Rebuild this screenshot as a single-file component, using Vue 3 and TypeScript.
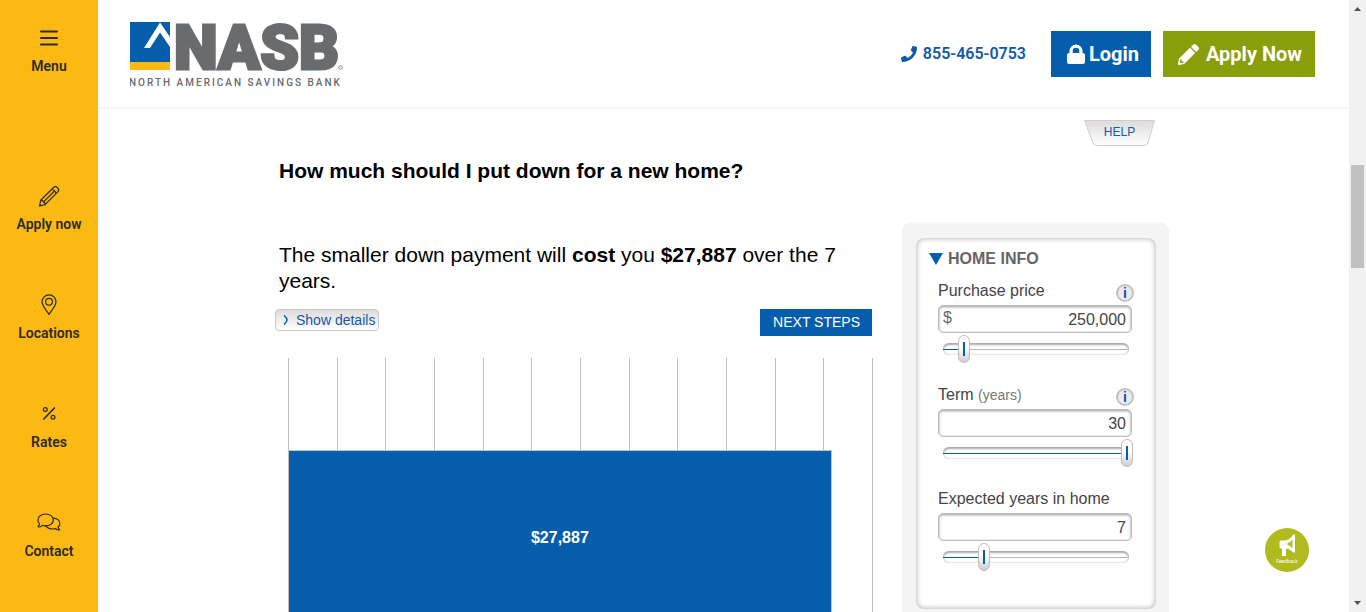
<script setup lang="ts">
import { computed, reactive, ref } from 'vue'

interface Field {
  id: string
  label: string
  unit?: string
  prefix?: string
  info: boolean
  min: number
  max: number
  step: number
  value: number
}

const links = [
  { id: 'apply', label: 'Apply now' },
  { id: 'locations', label: 'Locations' },
  { id: 'rates', label: 'Rates' },
  { id: 'contact', label: 'Contact' },
]

const fields = reactive<Field[]>([
  { id: 'price', label: 'Purchase price', prefix: '$', info: true, min: 50000, max: 1800000, step: 1000, value: 250000 },
  { id: 'term', label: 'Term', unit: '(years)', info: true, min: 1, max: 30, step: 1, value: 30 },
  { id: 'years', label: 'Expected years in home', info: false, min: 1, max: 28, step: 1, value: 7 },
])

const cost = ref(27887)
const axisMax = 30000
const intervals = 12
const costText = computed(() => '$' + cost.value.toLocaleString('en-US'))
const barWidth = computed(() => (cost.value / axisMax) * 100 + '%')

function fill(f: Field): string {
  return ((f.value - f.min) / (f.max - f.min)) * 100 + '%'
}

function onText(f: Field, e: Event) {
  const n = Number((e.target as HTMLInputElement).value.replace(/[^0-9]/g, ''))
  f.value = Math.min(f.max, Math.max(f.min, n))
}
</script>

<template>
  <div class="page">
    <nav class="side" aria-label="Quick links">
      <button class="side-item menu" type="button">
        <svg width="24" height="24" viewBox="0 0 24 24" stroke="#2b2b2b" stroke-width="2" stroke-linecap="round">
          <path d="M4 5.500h16M4 12h16M4 18.500h16" />
        </svg>
        <span>Menu</span>
      </button>
      <a v-for="l in links" :key="l.id" class="side-item" href="#">
        <svg width="24" height="24" viewBox="0 0 24 24" fill="none" stroke="#2b2b2b" stroke-width="1.200" stroke-linejoin="round" stroke-linecap="round">
          <template v-if="l.id === 'apply'">
            <path d="M2.500 22l1.200-5.700L16.600 3.500c1.400-1.200 2.900-.8 4 .3s1.500 2.600.2 4L8 20.700zM3.700 16.300c2.300 0 4.300 2 4.300 4.400M14.600 5.500c2.300.3 4 2 4.300 4.300M6.300 18.100L17 7.500M2.500 22l1.700-.4-1.300-1.300z" />
          </template>
          <template v-else-if="l.id === 'locations'">
            <path d="M12 21.500C9.500 17.300 5 13 5 8.800a7 7 0 0 1 14 0c0 4.200-4.500 8.500-7 12.700z" />
            <circle cx="12" cy="8.800" r="3.400" />
          </template>
          <template v-else-if="l.id === 'rates'">
            <path d="M6.800 17L17.400 6" stroke-width="1.700" />
            <circle cx="8.300" cy="7.500" r="1.900" />
            <circle cx="16" cy="15.300" r="1.900" />
          </template>
          <template v-else>
            <path d="M2.500 16c-.8 0-1.300-.2-1.500-.4 1.200-.9 1.500-2 1.400-3C1.300 11.400.9 10.200.9 9c0-3.600 3.500-6 7.700-6s7.700 2.400 7.700 5.900-3.500 5.900-7.700 5.900c-1.300 0-2.300-.1-3.300-.5-.8.9-1.700 1.500-2.800 1.700z" />
            <path d="M16.500 7.200c3.600.2 6.300 2.300 6.300 5.300 0 1.300-.5 2.500-1.600 3.500 0 1.100.5 2 1.500 2.700-1.500.5-3 .1-4.100-1-3.800.9-8.200-.2-10-2.900" />
          </template>
        </svg>
        <span>{{ l.label }}</span>
      </a>
    </nav>

    <div class="body">
      <header class="top">
        <a class="logo" href="#" aria-label="NASB North American Savings Bank">
          <svg width="216" height="90" viewBox="0 -15 216 90">
            <path d="M0 2h40v40H0z" fill="#045eab" />
            <path d="M0 42h40v8H0z" fill="#fdb913" />
            <path d="M14 28L30 2.500l10 14.500v10L30 12.500 20 28z" fill="#fff" />
            <text x="44" y="49" class="word">NASB</text>
            <circle cx="210.500" cy="47.500" r="1.800" fill="none" stroke="#8a8b8d" />
            <text x="-1" y="66" class="tag">NORTH AMERICAN SAVINGS BANK</text>
          </svg>
        </a>
        <div class="actions">
          <a class="phone" href="tel:855-465-0753">
            <svg width="16" height="16" viewBox="0 0 512 512" fill="#1459a4">
              <path d="M493 25L389 1c-11-3-23 3-27 14l-48 112c-4 10-1 21 7 28l61 50c-36 77-99 140-178 178l-50-61c-7-8-18-11-28-7L14 363c-10 4-16 16-13 27l24 104c2 11 12 18 23 18 256 0 464-207 464-464 0-11-8-20-19-23z" />
            </svg>
            <span>855-465-0753</span>
          </a>
          <button class="btn login" type="button">
            <svg width="18" height="21" viewBox="0 0 18 21">
              <path d="M2.500 9V7a6.500 6.500 0 0 1 13 0v2H16c1.100 0 2 .9 2 2v7c0 1.100-.9 2-2 2H2c-1.100 0-2-.9-2-2v-7c0-1.100.9-2 2-2zm3.200 0h6.600V7a3.300 3.300 0 0 0-6.600 0z" fill="#fff" />
            </svg>
            <span>Login</span>
          </button>
          <button class="btn apply" type="button">
            <svg width="21" height="21" viewBox="0 0 512 512" fill="#fff">
              <path d="M498 142l-46 46c-5 5-13 5-17 0L324 77c-5-5-5-12 0-17l46-46c19-19 49-19 68 0l60 60c19 19 19 49 0 68zM284 100L22 362 0 484c-3 16 12 30 28 28l122-22 262-262c5-5 5-13 0-17L301 100c-4-5-12-5-17 0zM88 424h48v36l-64 11-31-31 11-64h36z" />
            </svg>
            <span>Apply Now</span>
          </button>
        </div>
      </header>

      <main class="calc">
        <div class="help-row">
          <button class="help" type="button">
            <svg width="71" height="27" viewBox="0 0 72 27" preserveAspectRatio="none" aria-hidden="true">
              <defs>
                <linearGradient id="tab" x1="0" y1="0" x2="0" y2="1">
                  <stop offset="0" stop-color="#dedbdb" />
                  <stop offset="1" stop-color="#fff" />
                </linearGradient>
              </defs>
              <path d="M.5.5h71L65 22.500q-1 3-4 3H13q-3 0-4-3z" fill="url(#tab)" stroke="#cfcfcf" />
            </svg>
            <span>HELP</span>
          </button>
        </div>
        <h1>How much should I put down for a new home?</h1>

        <div class="columns">
          <section class="result">
            <p class="summary">
              The smaller down payment will <b>cost</b> you <b>{{ costText }}</b> over the 7 years.
            </p>
            <div class="tools">
              <button class="details" type="button">
                <svg width="6" height="10" viewBox="0 0 6 10" fill="none" stroke="#045eab" stroke-width="1.500">
                  <path d="M1 .5q3 2.500 3 4.500T1 9.500" />
                </svg>
                <span>Show details</span>
              </button>
              <button class="next" type="button">NEXT STEPS</button>
            </div>
            <div class="chart">
              <div class="lines"><i v-for="n in intervals" :key="n"></i></div>
              <div class="bar" :style="{ width: barWidth }">{{ costText }}</div>
            </div>
          </section>

          <aside class="panel">
            <div class="card">
              <button class="heading" type="button" aria-expanded="true">
                <svg width="14" height="12" viewBox="0 0 14 12"><path d="M0 0h14L7 12z" fill="#045eab" /></svg>
                <span>HOME INFO</span>
              </button>
              <div v-for="f in fields" :key="f.id" class="field">
                <div class="label-row">
                  <label :for="f.id">{{ f.label }} <small v-if="f.unit">{{ f.unit }}</small></label>
                  <button v-if="f.info" class="info" type="button" :aria-label="'About ' + f.label">i</button>
                </div>
                <div class="box">
                  <span v-if="f.prefix">{{ f.prefix }}</span>
                  <input :id="f.id" type="text" :value="f.value.toLocaleString('en-US')" @change="onText(f, $event)" />
                </div>
                <div class="slider">
                  <span class="rail"><span class="fill" :style="{ width: fill(f) }"></span></span>
                  <input v-model.number="f.value" type="range" :min="f.min" :max="f.max" :step="f.step" :aria-label="f.label" />
                </div>
              </div>
            </div>
          </aside>
        </div>
      </main>
    </div>

    <div class="scroll" aria-hidden="true">
      <svg width="17" height="17" viewBox="0 0 17 17"><path d="M5 11l3.500-4 3.500 4z" fill="#505050" /></svg>
      <div class="track"><div class="thumb"></div></div>
      <svg width="17" height="17" viewBox="0 0 17 17"><path d="M5 6l3.500 4L12 6z" fill="#505050" /></svg>
    </div>

    <button class="feedback" type="button">
      <svg width="44" height="44" viewBox="0 0 44 44">
        <path d="M16 12.500h4c4-.5 6.500-3 8-6h2v18h-2c-1.500-2-3.500-3.500-7-4V28h-4v-7.500h-1q-1.500 0-1.500-1.500v-5q0-1.500 1.500-1.500z" fill="#fff" />
        <path d="M22.500 15c2.500-.5 4-2 5-3.500v9c-1-1.500-2.500-3-5-3.500z" fill="#b0bb1f" />
        <text x="22" y="35" text-anchor="middle">Feedback</text>
      </svg>
    </button>
  </div>
</template>

<style>
html,
body {
  overflow: hidden;
}
body {
  margin: 0;
}
</style>

<style scoped>
.page {
  display: grid;
  grid-template-columns: 98px 1fr 17px;
  height: 100vh;
  overflow: hidden;
  background: #fff;
  font-family: "Liberation Sans", Arial, sans-serif;
}
button {
  margin: 0;
  padding: 0;
  border: 0;
  background: none;
  font: inherit;
  cursor: pointer;
}
a {
  text-decoration: none;
}
svg {
  display: block;
  flex: none;
}
.side {
  display: flex;
  flex-direction: column;
  gap: 59px;
  padding-top: 26px;
  background: #fdb913;
}
.side-item {
  display: flex;
  flex-direction: column;
  align-items: center;
  gap: 6px;
  color: #2b2b2b;
  font: 600 14px/20px Roboto, sans-serif;
}
.menu {
  margin-bottom: 49px;
}
.body {
  min-width: 0;
  overflow: hidden;
}
.top {
  display: flex;
  align-items: flex-start;
  justify-content: space-between;
  box-sizing: border-box;
  height: 109px;
  padding: 5px 34px 0 32px;
  border-bottom: 2px solid #f5f5f5;
}
.word {
  font: 900 62px Roboto, sans-serif;
  fill: #6a6b6d;
  stroke: #6a6b6d;
  stroke-width: 3px;
}
.tag {
  font: 500 10px Roboto, sans-serif;
  fill: #6a6b6d;
  letter-spacing: 2px;
}
.actions {
  display: flex;
  align-items: center;
  padding-top: 26px;
}
.phone {
  display: flex;
  align-items: center;
  gap: 6px;
  margin-right: 25px;
  color: #1459a4;
  font: 600 16px/22px Roboto, sans-serif;
}
.btn {
  display: flex;
  align-items: center;
  justify-content: center;
  height: 46px;
  color: #fff;
  font: 700 20px/24px Roboto, sans-serif;
}
.login {
  gap: 4px;
  width: 100px;
  margin-right: 12px;
  padding-left: 4px;
  background: #045eab;
}
.apply {
  gap: 7px;
  width: 152px;
  padding-left: 2px;
  background: #8a9d0a;
}
.calc {
  max-width: 891px;
  margin: 0 auto;
}
.help-row {
  display: flex;
  justify-content: flex-end;
  padding: 11px 14px 0 0;
}
.help {
  display: grid;
  padding-left: 2px;
  color: #1459a4;
  font: 12px/24px "Liberation Sans", Arial, sans-serif;
}
.help > * {
  grid-area: 1 / 1;
}
h1 {
  margin: 11px 0 0 1px;
  font-size: 21px;
  line-height: 26px;
}
.columns {
  display: grid;
  grid-template-columns: 1fr 267px;
  gap: 30px;
  margin-top: 39px;
}
.summary {
  margin: 19px 0 0 1px;
  font-size: 21px;
  line-height: 26px;
}
.tools {
  display: flex;
  justify-content: space-between;
  align-items: flex-start;
  margin: 15px 0 22px -3px;
}
.details {
  display: flex;
  align-items: center;
  gap: 7px;
  box-sizing: border-box;
  height: 22px;
  padding: 0 3px 0 7px;
  border: 1px solid #c6c6c6;
  border-radius: 4px;
  background: linear-gradient(#dedbdb, #fff);
  color: #1459a4;
  font-size: 14px;
}
.next {
  height: 27px;
  padding: 0 12px 2px 13px;
  background: #045eab;
  color: #fff;
  font-size: 14px;
}
.chart {
  display: grid;
  height: 266px;
  margin: 0 -1px 0 10px;
}
.chart > * {
  grid-area: 1 / 1;
}
.lines {
  display: grid;
  grid-template-columns: repeat(12, 1fr);
  border-right: 1px solid #c0c0c0;
}
.lines i {
  border-left: 1px solid #c0c0c0;
}
.bar {
  display: flex;
  align-items: center;
  justify-content: center;
  align-self: end;
  box-sizing: border-box;
  height: 174px;
  padding-top: 2px;
  border: 1px solid #c0c0c0;
  background: #045eab;
  color: #fff;
  font-weight: 700;
  font-size: 16px;
}
.panel {
  padding: 15px 13px 20px 14px;
  border-radius: 8px;
  background: #f4f4f4;
}
.card {
  padding: 10px 13px 18px;
  border-radius: 8px;
  background: #fff;
  box-shadow: inset 0 0 5px 1px #bdbdbd;
}
.heading {
  display: flex;
  align-items: center;
  gap: 5px;
  height: 22px;
  color: #666;
  font-weight: 700;
  font-size: 16px;
}
.field {
  height: 104px;
  margin: 0 9px;
  color: #444;
}
.heading + .field {
  margin-top: 9px;
}
.label-row {
  display: flex;
  justify-content: space-between;
  height: 26px;
  font-size: 16px;
  line-height: 24px;
}
small {
  color: #777;
  font-size: 14px;
}
.info {
  box-sizing: border-box;
  width: 18px;
  height: 18px;
  margin: 5px 0 0;
  border: 2px solid #c2c2c2;
  border-radius: 50%;
  background: #ebebeb;
  color: #0b55ab;
  font: 700 14px/14px "Liberation Sans", Arial, sans-serif;
}
.box {
  display: flex;
  box-sizing: border-box;
  height: 28px;
  margin-right: 2px;
  padding: 0 5px 0 4px;
  border: 1px solid #bbb;
  border-radius: 5px;
  background: #fff;
  box-shadow: inset 0 1px 3px #999;
  font-size: 16px;
  line-height: 23px;
}
.box span {
  color: #666;
}
.box input {
  flex: 1;
  min-width: 0;
  padding: 2px 0 0;
  border: 0;
  outline: 0;
  background: none;
  color: #444;
  font: 16px/24px "Liberation Sans", Arial, sans-serif;
  text-align: right;
}
.slider {
  display: grid;
  align-items: center;
  height: 28px;
  margin: 2px 1px 0 -1px;
}
.slider > * {
  grid-area: 1 / 1;
}
.rail {
  display: flex;
  align-items: center;
  box-sizing: border-box;
  height: 12px;
  margin: 0 4px 0 6px;
  border-radius: 6px;
  background: linear-gradient(#b5b5b5, #b5b5b5) center / 100% 1px no-repeat;
  box-shadow: inset 0 2px 2px #aaa, inset 0 0 2px #aaa;
}
.fill {
  height: 1px;
  background: #045eab;
}
.slider input {
  appearance: none;
  width: 100%;
  height: 28px;
  margin: 0;
  background: none;
}
.slider input::-webkit-slider-thumb {
  appearance: none;
  box-sizing: border-box;
  width: 12px;
  height: 28px;
  border: 1px solid #bdbdbd;
  border-radius: 6px;
  background:
    linear-gradient(#045eab, #045eab) center / 2px 14px no-repeat,
    linear-gradient(#fff 45%, #ccc);
}
.scroll {
  display: flex;
  flex-direction: column;
  background: #f1f1f1;
}
.track {
  flex: 1;
  padding: 148px 2px 0;
}
.thumb {
  height: 103px;
  background: #c1c1c1;
}
.feedback {
  position: absolute;
  right: 57px;
  bottom: 40px;
  width: 44px;
  height: 44px;
  border-radius: 50%;
  background: #b0bb1f;
}
.feedback text {
  font: 5px Roboto, sans-serif;
  fill: #fff;
}
</style>
